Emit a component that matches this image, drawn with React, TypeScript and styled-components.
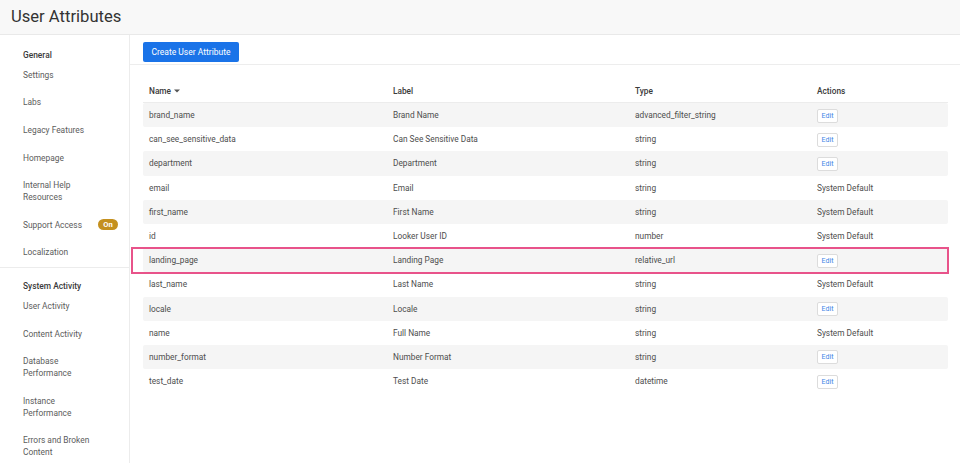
import React from "react";
import styled, { createGlobalStyle } from "styled-components";

const Global = createGlobalStyle`
  html, body { margin: 0; padding: 0; background: #ffffff; }
  body { font-family: Roboto, "Noto Sans", "Liberation Sans", sans-serif; -webkit-font-smoothing: antialiased; }
  * { box-sizing: border-box; }
`;

const Page = styled.div`
  width: 960px;
  height: 463px;
  display: flex;
  flex-direction: column;
  overflow: hidden;
`;

const Header = styled.header`
  height: 35px;
  flex: none;
  background: #f8f8f8;
  border-bottom: 1px solid #e9e9e9;
  display: flex;
  align-items: center;
  padding: 0 0 2px 11px;
`;

const Title = styled.h1`
  margin: 0;
  font-size: 16.6px;
  font-weight: 400;
  color: #333;
`;

const Body = styled.div`
  flex: 1;
  display: flex;
  min-height: 0;
`;

const Sidebar = styled.nav`
  width: 130px;
  flex: none;
  border-right: 1px solid #ececec;
  display: flex;
  flex-direction: column;
`;

const Section = styled.div<{ $last?: boolean }>`
  padding: ${(p) => (p.$last ? "12px 0 0" : "14px 0 1px")};
  border-bottom: ${(p) => (p.$last ? "none" : "1px solid #ececec")};
`;

const SectionTitle = styled.div`
  padding-left: 23px;
  font-size: 8.4px;
  line-height: 12px;
  font-weight: 500;
  color: #3a3a3a;
`;

const NavItem = styled.div`
  padding: 7.8px 11px 7.8px 23px;
  font-size: 8.4px;
  line-height: 12px;
  color: #5c5c5c;
  display: flex;
  align-items: center;
  justify-content: space-between;
`;

const NavLabel = styled.span`
  max-width: 72px;
`;

const Badge = styled.span`
  display: inline-flex;
  align-items: center;
  justify-content: center;
  width: 20px;
  height: 11px;
  border-radius: 6px;
  background: #c4901e;
  color: #fff;
  font-size: 7.5px;
  font-weight: 700;
`;

const Main = styled.main`
  flex: 1;
  display: flex;
  flex-direction: column;
  min-width: 0;
`;

const Toolbar = styled.div`
  display: flex;
  padding: 7px 13px 2px;
  border-bottom: 1px solid #ededed;
`;

const PrimaryButton = styled.button`
  height: 20px;
  width: 96px;
  padding: 0;
  border: none;
  border-radius: 2px;
  background: #1a73e8;
  color: #fff;
  font-family: inherit;
  font-size: 8.5px;
  cursor: pointer;
`;

const Table = styled.div`
  margin: 14px 12px 0 13px;
  display: flex;
  flex-direction: column;
`;

const Row = styled.div<{ $striped?: boolean; $head?: boolean }>`
  position: relative;
  display: grid;
  grid-template-columns: 244px 242px 183px 1fr;
  align-items: center;
  height: ${(p) => (p.$head ? "24px" : "24.2px")};
  background: ${(p) => (p.$striped ? "#f5f5f5" : "transparent")};
  border-radius: ${(p) => (p.$head ? "0" : "2px")};
  border-bottom: ${(p) => (p.$head ? "1px solid #ececec" : "none")};
`;

const Cell = styled.div<{ $head?: boolean }>`
  padding-left: 6px;
  font-size: 8.3px;
  color: ${(p) => (p.$head ? "#3a3a3a" : "#4d4d4d")};
  font-weight: ${(p) => (p.$head ? 500 : 400)};
  white-space: nowrap;
  display: flex;
  align-items: center;
  gap: 2px;
`;

const ActionCell = styled(Cell)`
  padding-left: 5px;
`;

const EditButton = styled.button`
  height: 14px;
  width: 21px;
  padding: 0;
  margin-top: 1px;
  background: #fff;
  border: 1px solid #dcdcdc;
  border-radius: 2px;
  color: #3f86e6;
  font-family: inherit;
  font-size: 7px;
`;

const Highlight = styled.div`
  position: absolute;
  left: -12px;
  right: -1px;
  top: -1px;
  bottom: -2px;
  border: 2px solid #e8538a;
  pointer-events: none;
`;

type Attr = { name: string; label: string; type: string; editable: boolean; highlight?: boolean };

const rows: Attr[] = [
  { name: "brand_name", label: "Brand Name", type: "advanced_filter_string", editable: true },
  { name: "can_see_sensitive_data", label: "Can See Sensitive Data", type: "string", editable: true },
  { name: "department", label: "Department", type: "string", editable: true },
  { name: "email", label: "Email", type: "string", editable: false },
  { name: "first_name", label: "First Name", type: "string", editable: false },
  { name: "id", label: "Looker User ID", type: "number", editable: false },
  { name: "landing_page", label: "Landing Page", type: "relative_url", editable: true, highlight: true },
  { name: "last_name", label: "Last Name", type: "string", editable: false },
  { name: "locale", label: "Locale", type: "string", editable: true },
  { name: "name", label: "Full Name", type: "string", editable: false },
  { name: "number_format", label: "Number Format", type: "string", editable: true },
  { name: "test_date", label: "Test Date", type: "datetime", editable: true },
];

const generalItems: { label: string; badge?: string }[] = [
  { label: "Settings" },
  { label: "Labs" },
  { label: "Legacy Features" },
  { label: "Homepage" },
  { label: "Internal Help Resources" },
  { label: "Support Access", badge: "On" },
  { label: "Localization" },
];

const activityItems = [
  "User Activity",
  "Content Activity",
  "Database Performance",
  "Instance Performance",
  "Errors and Broken Content",
];

const Caret = () => (
  <svg width="6" height="4" viewBox="0 0 6 4" style={{ marginLeft: 1 }}>
    <path d="M0 0.5 L6 0.5 L3 3.5 Z" fill="#555" />
  </svg>
);

export default function App() {
  return (
    <Page>
      <Global />
      <Header>
        <Title>User Attributes</Title>
      </Header>
      <Body>
        <Sidebar>
          <Section>
            <SectionTitle>General</SectionTitle>
            {generalItems.map((it) => (
              <NavItem key={it.label}>
                <NavLabel>{it.label}</NavLabel>
                {it.badge && <Badge>{it.badge}</Badge>}
              </NavItem>
            ))}
          </Section>
          <Section $last>
            <SectionTitle>System Activity</SectionTitle>
            {activityItems.map((label) => (
              <NavItem key={label}>
                <NavLabel>{label}</NavLabel>
              </NavItem>
            ))}
          </Section>
        </Sidebar>
        <Main>
          <Toolbar>
            <PrimaryButton>Create User Attribute</PrimaryButton>
          </Toolbar>
          <Table>
            <Row $head>
              <Cell $head>
                Name <Caret />
              </Cell>
              <Cell $head>Label</Cell>
              <Cell $head>Type</Cell>
              <ActionCell $head>Actions</ActionCell>
            </Row>
            {rows.map((r, i) => (
              <Row key={r.name} $striped={i % 2 === 0}>
                <Cell>{r.name}</Cell>
                <Cell>{r.label}</Cell>
                <Cell>{r.type}</Cell>
                <ActionCell>{r.editable ? <EditButton>Edit</EditButton> : "System Default"}</ActionCell>
                {r.highlight && <Highlight />}
              </Row>
            ))}
          </Table>
        </Main>
      </Body>
    </Page>
  );
}
